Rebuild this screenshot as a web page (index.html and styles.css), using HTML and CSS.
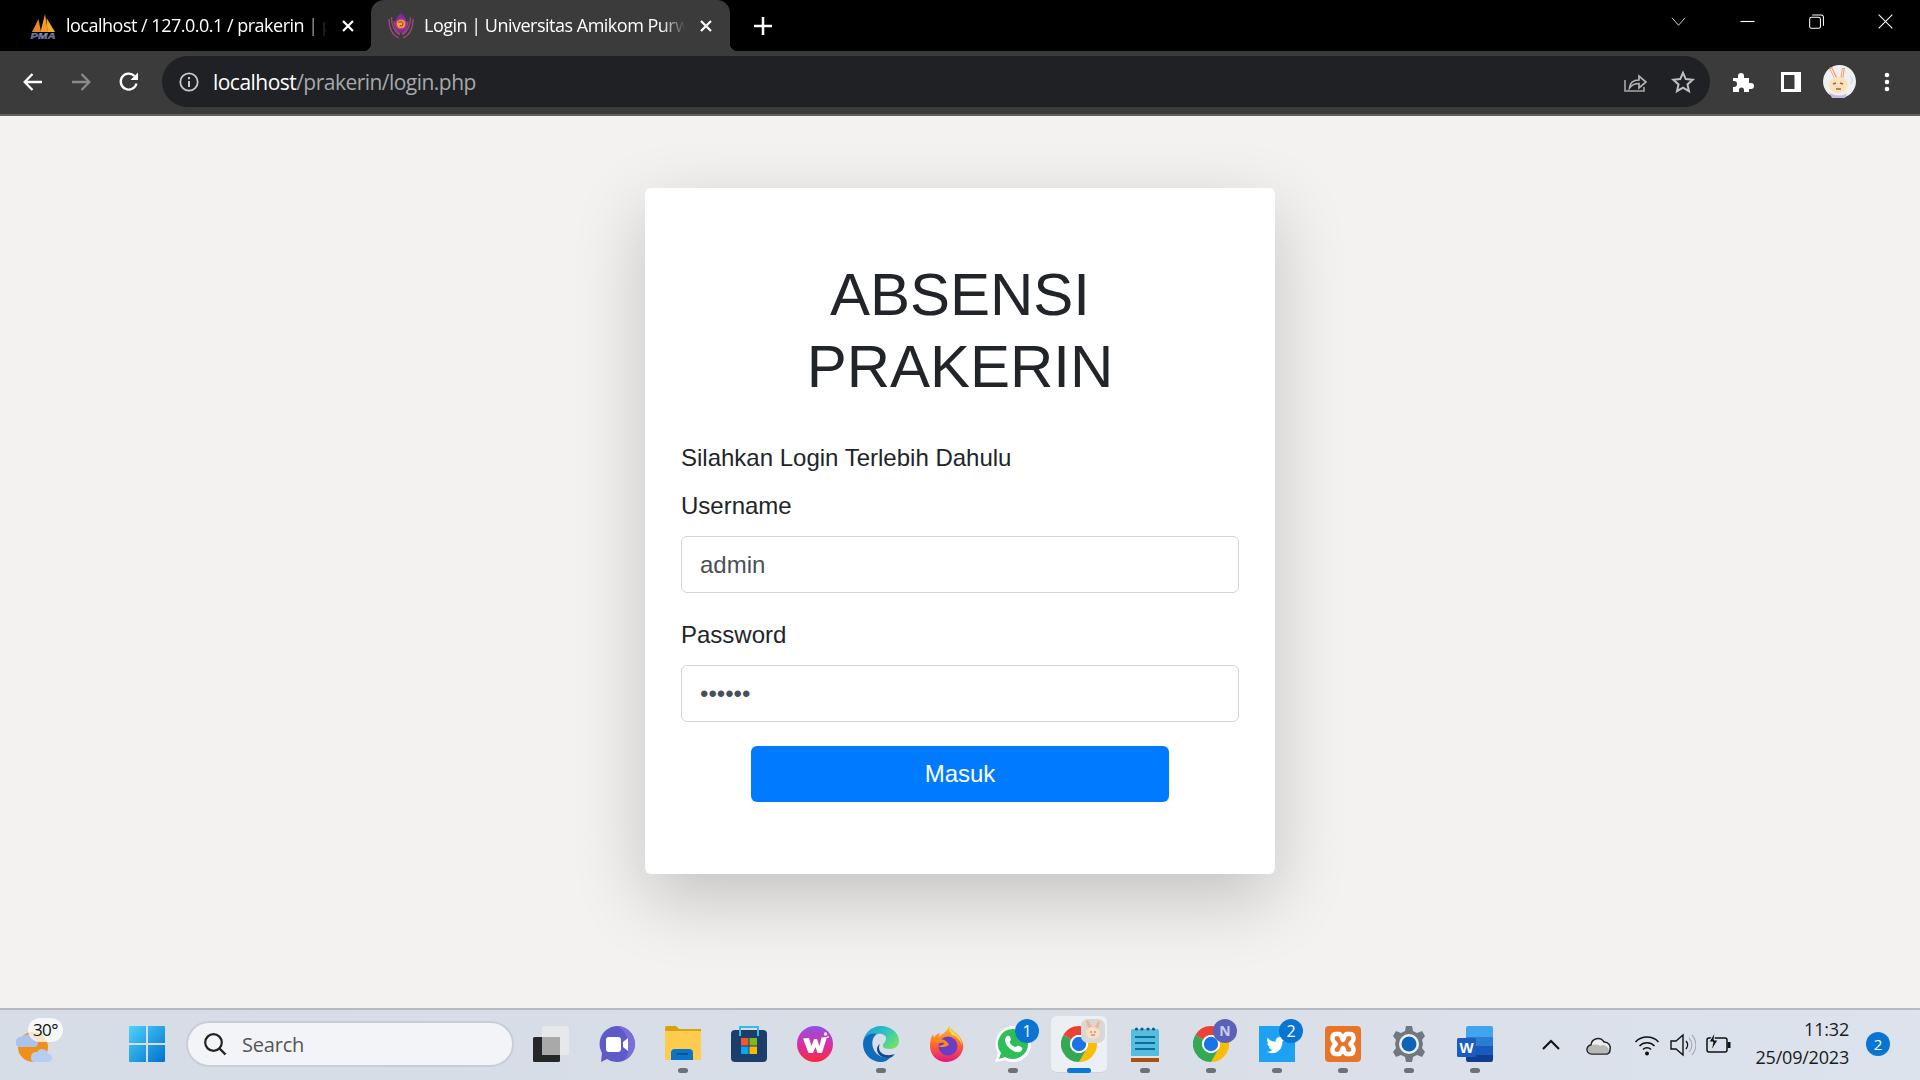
FILE: index.html
```html
<!DOCTYPE html>
<html lang="id">
<head>
<meta charset="utf-8">
<title>Login | Universitas Amikom Purwokerto</title>
<link rel="stylesheet" href="styles.css">
</head>
<body>
<header class="chrome">
  <div class="tabstrip">
    <div class="tab">
      <svg class="favicon" viewBox="0 0 26 26"><path d="M2 19 8.500 6 11 19z" fill="#e8862a"/><path d="M10.500 19 15 1l3 18z" fill="#f59a23"/><path d="M17.500 19 16.500 5 25 19z" fill="#f7ab2f"/><text x="13" y="25.500" class="pma" textLength="25" lengthAdjust="spacingAndGlyphs">PMA</text></svg>
      <span class="tab-title">localhost / 127.0.0.1 / prakerin | p</span>
      <svg class="tab-close" viewBox="0 0 14 14"><path d="M2 2l10 10M12 2 2 12" stroke="#fff" stroke-width="2.200"/></svg>
    </div>
    <div class="tab tab-active">
      <svg class="favicon" viewBox="0 0 26 26"><g fill="none" stroke="#9a4a7c" stroke-width="1.300"><path d="M1 6c0 9 3 16 10 19"/><path d="M25 6c0 9-3 16-10 19"/><path d="M3.500 4c0 8 2.500 14 8 18"/><path d="M22.500 4c0 8-2.500 14-8 18"/><path d="M6 8c.5 6 2 10 6 13"/><path d="M20 8c-.5 6-2 10-6 13"/></g><path d="M13 0c4 3 6 7 6 11 0 5-3 8-6 9-3-1-6-4-6-9 0-4 2-8 6-11z" fill="#7d2aa0"/><circle cx="13" cy="11" r="5.500" fill="#cf3d92"/><circle cx="13" cy="11" r="4" fill="#f5a818"/><path d="M10.500 9.500c3-2 5.500.5 4 3-1 1-2.500.5-2.500-.5" stroke="#6a1f88" fill="none"/></svg>
      <span class="tab-title">Login | Universitas Amikom Purw</span>
      <svg class="tab-close" viewBox="0 0 14 14"><path d="M2 2l10 10M12 2 2 12" stroke="#fff" stroke-width="2.200"/></svg>
    </div>
    <svg class="tab-new" viewBox="0 0 18 18"><path d="M9 0v18M0 9h18" stroke="#fff" stroke-width="2.500"/></svg>
    <div class="window-controls">
      <svg class="wc wc-down" viewBox="0 0 16 16"><path d="M1 4l7 8 7-8" fill="none" stroke="#ddd" stroke-width="1"/></svg>
      <svg class="wc wc-gap" viewBox="0 0 16 16"><path d="M.5 8h15" stroke="#fff" stroke-width="1.200"/></svg>
      <svg class="wc wc-gap" viewBox="0 0 16 16"><rect x=".7" y="3.500" width="11.500" height="11.800" rx="2" fill="none" stroke="#fff" stroke-width="1.100"/><path d="M3.500 1h9.500a2.400 2.400 0 0 1 2.400 2.400v9" fill="none" stroke="#fff" stroke-width="1.100"/></svg>
      <svg class="wc wc-gap" viewBox="0 0 16 16"><path d="M.7.700l14.600 14.600M15.300.7.700 15.300" stroke="#fff" stroke-width="1.100"/></svg>
    </div>
  </div>
  <div class="toolbar">
    <div class="tool"><svg viewBox="0 0 24 24"><path d="M21 12H4M11.500 4 3.700 12l7.800 8" fill="none" stroke="#fff" stroke-width="2.300"/></svg></div>
    <div class="tool"><svg viewBox="0 0 24 24"><path d="M3 12h17M12.500 4l7.800 8-7.800 8" fill="none" stroke="#8a8a8a" stroke-width="2.300"/></svg></div>
    <div class="tool"><svg viewBox="0 0 24 24"><path d="M19.500 13.500A8 8 0 1 1 17.500 6" fill="none" stroke="#fff" stroke-width="2.300"/><path d="M21 2.500V10h-7.500z" fill="#fff"/></svg></div>
    <div class="omnibox">
      <svg class="info" viewBox="0 0 20 20"><circle cx="10" cy="10" r="8.700" fill="none" stroke="#c8c8c8" stroke-width="1.800"/><path d="M10 9v6M10 5v2.200" stroke="#c8c8c8" stroke-width="2"/></svg>
      <span class="url"><span class="url-host">localhost</span>/prakerin/login.php</span>
      <div class="tool omni-first"><svg viewBox="0 0 24 24"><path d="M2 10v11h19v-4" fill="none" stroke="#a8a8a8" stroke-width="1.600"/><path d="M6.500 18c.5-5.500 4-8 9.500-8V6l7 6-7 6v-4.500c-4 0-7 1-9.500 4.500z" fill="none" stroke="#b4b4b4" stroke-width="1.700"/></svg></div>
      <div class="tool"><svg viewBox="0 0 24 24"><path d="M12 2.800l2.800 6.300 6.900.7-5.200 4.600 1.500 6.800-6-3.500-6 3.500 1.500-6.800-5.200-4.600 6.900-.7z" fill="none" stroke="#c0c0c0" stroke-width="2"/></svg></div>
    </div>
    <div class="tool tool-gap"><svg viewBox="0 0 24 24"><path d="M2 8h5V6a3 3 0 0 1 6 0v2h5v5h2a3 3 0 0 1 0 6h-2v3h-5v-2a2.500 2.500 0 0 0-5 0v2H2v-5h1a3 3 0 0 0 0-6H2z" fill="#fff"/></svg></div>
    <div class="tool"><svg viewBox="0 0 24 24"><path d="M2 2h20v20H2z" fill="#fff"/><path d="M5 5h10.500v14H5z" fill="#3b3b3b"/></svg></div>
    <div class="tool"><svg class="avatar" viewBox="0 0 33 33"><circle cx="16.500" cy="16.500" r="16.500" fill="#eef0f2"/><path d="M6 3l3-1 6 12-3 1z" fill="#f0a070"/><path d="M19 3l3 0-2 12h-3z" fill="#f0a070"/><path d="M7.500 4l1-.5 4.500 10-1 .5zM19.800 4h.8l-1.500 10h-.8z" fill="#fff3e6"/><ellipse cx="15.500" cy="20" rx="9.500" ry="8" fill="#f9e3bb"/><path d="M10 19l3-1M17 18l3 1M13 24h5" stroke="#c0553a" stroke-width="1.500"/><path d="M6 27c4 4 13 5 18 1l-2 5H9z" fill="#c9b8dc"/><path d="M27 11c3 2 3 6 0 8" fill="none" stroke="#b9d3e8"/></svg></div>
    <div class="tool"><svg viewBox="0 0 24 24"><circle cx="12" cy="5" r="2.300" fill="#fff"/><circle cx="12" cy="12" r="2.300" fill="#fff"/><circle cx="12" cy="19" r="2.300" fill="#fff"/></svg></div>
  </div>
</header>

<main class="page">
  <section class="card">
    <h1 class="title">ABSENSI PRAKERIN</h1>
    <p class="hint">Silahkan Login Terlebih Dahulu</p>
    <form class="form">
      <label class="label" for="user">Username</label>
      <input class="input" id="user" type="text" value="admin">
      <label class="label" for="pass">Password</label>
      <input class="input" id="pass" type="password" value="123456">
      <button class="submit" type="button">Masuk</button>
    </form>
  </section>
</main>

<footer class="taskbar">
  <div class="weather">
    <svg class="weather-icon" viewBox="0 0 46 40"><circle cx="19" cy="22" r="15" fill="#f08f1c"/><path d="M2 18a5 5 0 0 1 6-6 7 7 0 0 1 12 2 4 4 0 0 1 0 8H5a4 4 0 0 1-3-4z" fill="#a9c4ea"/><path d="M17 32a5 5 0 0 1 6-5 6 6 0 0 1 11 2 4 4 0 0 1 0 8H20a4 4 0 0 1-3-5z" fill="#b5cdf0"/></svg>
    <span class="temp">30°</span>
  </div>
  <div class="tb-cell tb-start">
    <svg class="tb-icon" viewBox="0 0 36 36"><defs><linearGradient id="win" x1="0" y1="0" x2="1" y2="1"><stop offset="0" stop-color="#4fd2fb"/><stop offset="1" stop-color="#0071ce"/></linearGradient></defs><path d="M0 1a1 1 0 0 1 1-1h16v17H0zM19 0h16a1 1 0 0 1 1 1v16H19zM0 19h17v17H1a1 1 0 0 1-1-1zM19 19h17v16a1 1 0 0 1-1 1H19z" fill="url(#win)"/></svg>
  </div>
  <div class="search">
    <svg class="search-icon" viewBox="0 0 24 24"><circle cx="10.500" cy="10.500" r="8.300" fill="none" stroke="#222" stroke-width="2.200"/><path d="M16.500 16.500l6 6" stroke="#222" stroke-width="2.400"/></svg>
    <span class="search-text">Search</span>
  </div>
  <div class="tb-apps">
    <div class="tb-cell"><svg class="tb-icon" viewBox="0 0 36 36"><rect y="11" width="27" height="25" rx="1.500" fill="#262626"/><rect x="9" width="27" height="29" rx="1.500" fill="#e8e9ea" fill-opacity=".9"/><rect x="9" y="11" width="18" height="18" fill="#a9a9a9"/></svg></div>
    <div class="tb-cell"><svg class="tb-icon" viewBox="0 0 36 36"><path d="M18 0a18 18 0 1 1-10 33l-6 3 1-9A18 18 0 0 1 18 0z" fill="#5e5ac9"/><path d="M18 0a18 18 0 0 1 18 18 18 18 0 0 1-11 16 14 14 0 0 0 3-16A17 17 0 0 0 18 0z" fill="#7a6fd6"/><rect x="7" y="11" width="15" height="15" rx="3" fill="#fff"/><path d="M24 16l5-4v13l-5-4z" fill="#fff"/></svg></div>
    <div class="tb-cell tb-run"><svg class="tb-icon" viewBox="0 0 36 36"><path d="M0 2a2 2 0 0 1 2-2h9l3 3h22v4H0z" fill="#d9a00f"/><path d="M0 5h35a1 1 0 0 1 1 1v28H0z" fill="#fdcb4d"/><path d="M6 34v-7a4 4 0 0 1 4-4h14a4 4 0 0 1 4 4v7z" fill="#0a74c7"/><path d="M12 28h11" stroke="#05518e" stroke-width="1.800"/></svg></div>
    <div class="tb-cell"><svg class="tb-icon" viewBox="0 0 36 36"><rect y="4" width="36" height="32" rx="4" fill="#1d3d6b"/><path d="M9 10V1h18v9" fill="none" stroke="#38b8ec" stroke-width="2"/><rect x="10" y="12" width="7.500" height="7.500" fill="#f05a28"/><rect x="18.500" y="12" width="7.500" height="7.500" fill="#81b81d"/><rect x="10" y="20.500" width="7.500" height="7.500" fill="#05a5f0"/><rect x="18.500" y="20.500" width="7.500" height="7.500" fill="#fdb900"/></svg></div>
    <div class="tb-cell"><svg class="tb-icon" viewBox="0 0 36 36"><defs><linearGradient id="wps" x1="0" y1="0" x2="0" y2="1"><stop offset="0" stop-color="#8f52e8"/><stop offset=".55" stop-color="#dc2ca0"/><stop offset="1" stop-color="#fa2a3c"/></linearGradient></defs><circle cx="18" cy="18" r="18" fill="url(#wps)"/><path d="M6 12.500 12 12l2.500 8 2.500-7h3l2.500 7 2-8.500 5.500-.5L25 27h-4.500L18.500 21 16 27h-4.500z" fill="#fff"/><circle cx="28.500" cy="8" r="1.700" fill="#fff"/><circle cx="31" cy="11" r=".9" fill="#fff"/></svg></div>
    <div class="tb-cell tb-run"><svg class="tb-icon" viewBox="0 0 36 36"><defs><linearGradient id="edge1" x1="0" y1="0" x2="1" y2=".6"><stop offset="0" stop-color="#1b9bd8"/><stop offset=".6" stop-color="#2fc5c0"/><stop offset="1" stop-color="#6be06a"/></linearGradient></defs><path d="M0 18C0 8 8 0 18 0c10 0 18 7 18 15 0 5-4 8-9 8-4 0-7-1-7-3 0-4 3-3 3-8 0-3-5-5-8-4C7 9 0 12 0 18z" fill="url(#edge1)"/><path d="M0 18c0-8 8-12 14-10-5 3-6 10-3 16 3 6 10 9 17 7-3 3-6 5-10 5C8 36 0 28 0 18z" fill="#0f6cbd"/><path d="M14 23c0 7 8 11 15 8l3-3c-3 1-8 2-12 0-4-2-5-7-3-10-2 1-3 3-3 5z" fill="#114a8b"/></svg></div>
    <div class="tb-cell"><svg class="tb-icon" viewBox="0 0 36 36"><defs><linearGradient id="ff" x1="0" y1="0" x2="0" y2="1"><stop offset="0" stop-color="#ffbd2f"/><stop offset=".5" stop-color="#ff6a2a"/><stop offset="1" stop-color="#e31587"/></linearGradient></defs><path d="M20 0c1 3 5 5 8 8 5 5 7 10 6 15-2 8-9 13-17 13C8 36 1 29 1 20c0-5 1-9 3-12l1 4c1-3 3-4 6-5-1 2-1 3-1 4 3-3 8-5 10-11z" fill="url(#ff)"/><path d="M20 1c1 3 5 5 8 8 3 3 5 6 5 10-2-5-5-9-10-10-2-2-3-5-3-8z" fill="#ffe14d"/><circle cx="19" cy="20" r="9.500" fill="#6a3dc4"/><path d="M5 15c3 3 7 1 11 2-2 2-4 3-7 3 3 2 8 1 11-1-1-3-5-6-9-6-2 0-5 0-6 2z" fill="#ff8a1f"/></svg></div>
    <div class="tb-cell tb-run"><svg class="tb-icon" viewBox="0 0 36 36"><path d="M18 0a18 18 0 0 1 0 36c-3 0-6-1-8-2l-10 2 3-9A18 18 0 0 1 18 0z" fill="#fff"/><path d="M18 3a15 15 0 0 1 0 30c-3 0-6-1-8-2l-6 2 2-6A15 15 0 0 1 18 3z" fill="#2dbf57"/><path d="M12 10c2-1 3 0 4 3 0 2-2 2-1 4 1 2 3 3 5 4 2 0 2-2 4-1 3 1 4 2 3 4-2 3-6 3-10 0-4-2-7-7-7-10 0-2 1-3 2-4z" fill="#fff"/></svg><span class="badge">1</span></div>
    <div class="tb-cell tb-active"><svg class="tb-icon" viewBox="0 0 36 36"><use href="#chrome-logo"/></svg><svg class="tb-corner" viewBox="0 0 24 24"><rect width="24" height="24" rx="7" fill="#d9d7d5"/><path d="M7 9 5 2l2-1 4 7zM14 8l3-6 2 1-2 7z" fill="#f2b594"/><ellipse cx="12" cy="14" rx="7" ry="6" fill="#f7e0c4"/><path d="M9 13h2M13 13h2M10 16h4" stroke="#bd6a55" stroke-width="1"/></svg></div>
    <div class="tb-cell tb-run"><svg class="tb-icon" viewBox="0 0 36 36"><rect x="4" y="3" width="28" height="28" rx="2" fill="#54bde0"/><circle cx="9.500" cy="3" r="1.600" fill="#0c5f85"/><circle cx="15" cy="3" r="1.600" fill="#0c5f85"/><circle cx="21" cy="3" r="1.600" fill="#0c5f85"/><circle cx="26.500" cy="3" r="1.600" fill="#0c5f85"/><path d="M8 11h20M8 17h20M8 23h20" stroke="#0c6d96" stroke-width="2"/><rect x="4" y="31" width="28" height="5" fill="#a65212"/><rect x="4" y="30" width="28" height="2" fill="#e8e2d8"/></svg></div>
    <div class="tb-cell tb-run"><svg class="tb-icon" viewBox="0 0 36 36"><use href="#chrome-logo"/></svg><span class="tb-corner tb-letter">N</span></div>
    <div class="tb-cell tb-run"><svg class="tb-icon" viewBox="0 0 36 36"><rect width="36" height="36" fill="#1da1f2"/><path transform="translate(3.500 4) scale(.8)" d="M29 11c-1 .5-2 1-3 1 1-.6 2-1.700 2-3-1 .6-2 1-3 1.200a5 5 0 0 0-8.500 4.500c-4 0-8-2-10-5-1.500 2.500-.7 5.500 1.500 7-.8 0-1.500-.2-2-.5 0 2.500 1.700 4.500 4 5-.7.200-1.500.2-2.200.1.700 2 2.500 3.400 4.700 3.400-2.500 2-5 2.500-7.500 2.300 8 5 20 1 20-12.500 1-.7 1.800-1.600 2.500-2.500z" fill="#fff"/></svg><span class="badge">2</span></div>
    <div class="tb-cell tb-run"><svg class="tb-icon" viewBox="0 0 36 36"><rect width="36" height="36" rx="4" fill="#e8742a"/><path d="M11 8h3c3 0 3 6 4 6s1-6 4-6h3c4 0 5 6 1 9-1 1-1 1 0 2 4 3 3 9-1 9h-3c-3 0-3-6-4-6s-1 6-4 6h-3c-4 0-5-6-1-9 1-1 1-1 0-2-4-3-3-9 1-9z" fill="none" stroke="#fff" stroke-width="4.500"/></svg></div>
    <div class="tb-cell tb-run"><svg class="tb-icon" viewBox="0 0 36 36"><path d="M15 0h6l1 5 4 2 5-2 3 5-3 4 1 4-1 4 3 4-3 5-5-2-4 2-1 5h-6l-1-5-4-2-5 2-3-5 3-4-1-4 1-4-3-4 3-5 5 2 4-2z" fill="#70787f"/><circle cx="18" cy="18" r="10" fill="#eef1f5"/><circle cx="18" cy="18" r="7.500" fill="#0b64b8"/></svg></div>
    <div class="tb-cell tb-run"><svg class="tb-icon" viewBox="0 0 36 36"><path d="M9 2a2 2 0 0 1 2-2h23a2 2 0 0 1 2 2v9H9z" fill="#41a5ee"/><rect x="9" y="11" width="27" height="9" fill="#2b7cd3"/><rect x="9" y="20" width="27" height="9" fill="#185abd"/><path d="M9 29h27v5a2 2 0 0 1-2 2H11a2 2 0 0 1-2-2z" fill="#103f91"/><rect y="12" width="19" height="19" rx="1.500" fill="#1a5dc0"/><text x="9.500" y="27" class="word-w">W</text></svg></div>
  </div>
  <div class="tray">
    <svg class="tray-icon tray-chevron" viewBox="0 0 20 20"><path d="M2 14l8-8 8 8" fill="none" stroke="#111" stroke-width="2"/></svg>
    <svg class="tray-icon tray-cloud" viewBox="0 0 26 22"><path d="M6 20a4.500 4.500 0 0 1-1-9 7 7 0 0 1 13-3 6 6 0 0 1 6 8 4 4 0 0 1-3 4z" fill="#ececec" stroke="#222" stroke-width="1.500"/><path d="M3 13c3-3 8-3 11-1 3-2 7-1 9 4 0 2-1 4-3 4H6a4 4 0 0 1-3-7z" fill="#8e8e8e" fill-opacity=".55"/></svg>
    <svg class="tray-icon tray-wifi" viewBox="0 0 26 22"><path d="M1.500 8a16 16 0 0 1 23 0M5.500 12a10.500 10.500 0 0 1 15 0M9 15.500a5.500 5.500 0 0 1 8 0" fill="none" stroke="#111" stroke-width="1.500"/><circle cx="13" cy="19.500" r="2" fill="#111"/></svg>
    <svg class="tray-icon tray-vol" viewBox="0 0 26 24"><path d="M1 8h5l7-6v20l-7-6H1z" fill="none" stroke="#111" stroke-width="1.400"/><path d="M16 8a6 6 0 0 1 0 8" fill="none" stroke="#111" stroke-width="1.400"/><path d="M19 5a10 10 0 0 1 0 14M22 2a15 15 0 0 1 0 20" fill="none" stroke="#aab" stroke-width="1.200"/></svg>
    <svg class="tray-icon tray-bat" viewBox="0 0 26 24"><rect x="2" y="7" width="20" height="14" rx="2" fill="none" stroke="#111" stroke-width="1.500"/><rect x="22.500" y="11" width="3" height="6" fill="#111"/><path d="M10 1 4 11h4l-2 9 7-11H9z" fill="#111" stroke="#dde3ec"/></svg>
    <div class="clock"><span>11:32</span><span>25/09/2023</span></div>
    <span class="notify">2</span>
  </div>
</footer>

<svg class="defs" width="0" height="0"><defs><g id="chrome-logo"><path d="M18 0A18 18 0 0 1 33.600 9H18a9 9 0 0 0-7.800 4.500L2.400 9A18 18 0 0 1 18 0z" fill="#ea4335"/><path d="M33.600 9A18 18 0 0 1 18 36l7.800-13.500A9 9 0 0 0 18 9z" fill="#fbbc04"/><path d="M2.400 9A18 18 0 0 0 18 36l7.800-13.500a9 9 0 0 1-15.600-9z" fill="#34a853"/><circle cx="18" cy="18" r="9" fill="#fff"/><circle cx="18" cy="18" r="7.200" fill="#1a73e8"/></g></defs></svg>
</body>
</html>
```

FILE: styles.css
```css
* { box-sizing: border-box; }

html, body { height: 100%; }

body {
  margin: 0;
  display: flex;
  flex-direction: column;
  height: 1080px;
  overflow: hidden;
  background: #f3f2f1;
  font-family: "Liberation Sans", Arial, sans-serif;
  color: #212529;
}

/* browser chrome */
.chrome { flex: none; font-family: "Open Sans", "Noto Sans", sans-serif; }

.tabstrip {
  display: flex;
  align-items: center;
  height: 51px;
  background: #000;
  color: #fff;
}

.tab {
  position: relative;
  display: flex;
  align-items: center;
  width: 371px;
  height: 51px;
  padding: 0 16px 0 30px;
}

.tab-active {
  width: 359px;
  padding-left: 17px;
  padding-right: 17px;
  background: #3b3b3b;
  border-radius: 13px 13px 0 0;
}

.tab-active::before,
.tab-active::after {
  content: "";
  position: absolute;
  bottom: 0;
  width: 8px;
  height: 8px;
}

.tab-active::before { left: -8px; background: radial-gradient(circle at 0 0, #000 8px, #3b3b3b 8.5px); }
.tab-active::after { right: -8px; background: radial-gradient(circle at 100% 0, #000 8px, #3b3b3b 8.5px); }

.favicon { flex: none; width: 26px; height: 26px; margin-right: 10px; }

.pma { font: italic 700 9px "Liberation Sans", sans-serif; fill: #4d5c9c; text-anchor: middle; stroke: #c7cde0; stroke-width: .25px; }

.tab-title {
  flex: 1;
  min-width: 0;
  margin-top: -2px;
  white-space: nowrap;
  font-size: 18px;
  letter-spacing: -.5px;
  -webkit-mask-image: linear-gradient(to right, #000 90%, transparent 99%);
  mask-image: linear-gradient(to right, #000 90%, transparent 99%);
}

.tab-close { flex: none; width: 14px; height: 14px; margin-left: 11px; }

.tab-new { flex: none; width: 18px; height: 18px; margin-left: 24px; }

.window-controls {
  display: flex;
  align-items: center;
  margin-left: auto;
  padding-right: 27px;
  align-self: flex-start;
  padding-top: 14px;
}

.wc { width: 15px; height: 15px; display: block; }
.wc-gap { margin-left: 54px; }

.toolbar {
  display: flex;
  align-items: center;
  height: 65px;
  padding: 0 9px 2px;
  background: #3b3b3b;
  border-bottom: 2px solid #5f5f5f;
}

.tool {
  flex: none;
  display: flex;
  align-items: center;
  justify-content: center;
  width: 48px;
  height: 48px;
}

.tool svg { width: 24px; height: 24px; }
.tool .avatar { width: 33px; height: 33px; }
.tool-gap { margin-left: 9px; }

.omnibox {
  flex: 1;
  display: flex;
  align-items: center;
  height: 51px;
  margin-left: 9px;
  padding: 0 3px 0 17px;
  background: #202124;
  border-radius: 26px;
}

.info { flex: none; width: 20px; height: 20px; margin-right: 14px; }

.url { font-size: 21px; letter-spacing: -.53px; color: #a6a8ab; white-space: nowrap; }
.url-host { color: #fff; }
.omni-first { margin-left: auto; }

/* page */
.page {
  flex: 1;
  display: flex;
  justify-content: center;
  align-items: flex-start;
  padding-top: 72px;
  min-height: 0;
}

.card {
  width: 630px;
  height: 686px;
  padding: 71px 36px 36px;
  background: #fff;
  border-radius: 6px;
  box-shadow: 0 24px 72px rgba(0, 0, 0, .2);
}

.title {
  margin: 0 0 37px;
  padding: 0 60px;
  font-size: 60px;
  font-weight: 400;
  line-height: 72px;
  text-align: center;
}

.hint { margin: 0 0 12px; font-size: 24px; line-height: 36px; }

.form { display: block; }

.label { display: block; margin-bottom: 12px; font-size: 24px; line-height: 36px; }

.input {
  display: block;
  width: 100%;
  height: 57px;
  margin-bottom: 24px;
  padding: 9px 18px;
  border: 1.5px solid #ced4da;
  border-radius: 6px;
  background: #fff;
  color: #495057;
  font: 24px/36px "Liberation Sans", Arial, sans-serif;
}

.submit {
  display: block;
  width: 418px;
  height: 56px;
  margin: 0 auto;
  border: 0;
  border-radius: 6px;
  background: #007bff;
  color: #fff;
  font: 24px/36px "Liberation Sans", Arial, sans-serif;
}

/* taskbar */
.taskbar {
  flex: none;
  display: flex;
  align-items: center;
  height: 72px;
  padding-bottom: 2px;
  border-top: 2px solid #b6babf;
  background: linear-gradient(to right, #d6dde6, #d9dee7 60%, #dde3ed);
  font-family: "Open Sans", "Noto Sans", sans-serif;
  color: #111;
}

.weather { position: relative; flex: none; width: 114px; height: 70px; }

.weather-icon { position: absolute; left: 14px; top: 16px; width: 46px; height: 40px; }

.temp {
  position: absolute;
  left: 28px;
  top: 9px;
  width: 35px;
  height: 24px;
  border-radius: 12px;
  background: rgba(255, 255, 255, .75);
  font-size: 17px;
  line-height: 24px;
  text-align: center;
  letter-spacing: -.5px;
}

.tb-cell {
  position: relative;
  flex: none;
  display: flex;
  align-items: center;
  justify-content: center;
  width: 66px;
  height: 70px;
}

.tb-start { margin-right: 6px; }

.tb-icon { display: block; width: 36px; height: 36px; }

.tb-run::after,
.tb-active::after {
  content: "";
  position: absolute;
  left: 50%;
  bottom: 6px;
  width: 10px;
  height: 5px;
  margin-left: -5px;
  border-radius: 3px;
  background: #6e7175;
}

.tb-active::before {
  content: "";
  position: absolute;
  left: 5px;
  right: 5px;
  top: 7px;
  bottom: 6px;
  border-radius: 6px;
  background: #eceff4;
  border-bottom: 1px solid #cfd4da;
}

.tb-active .tb-icon { position: relative; }

.tb-active::after {
  width: 24px;
  margin-left: -12px;
  background: #0a78d4;
}

.tb-corner {
  position: absolute;
  right: 7px;
  top: 10px;
  width: 24px;
  height: 24px;
}

.tb-letter {
  border-radius: 50%;
  background: #5a62b8;
  color: #c8cdf0;
  font-size: 14px;
  font-weight: 700;
  line-height: 24px;
  text-align: center;
}

.badge {
  position: absolute;
  right: 7px;
  top: 10px;
  width: 24px;
  height: 24px;
  border-radius: 50%;
  background: #0a74d2;
  color: #fff;
  font-size: 16px;
  line-height: 24px;
  text-align: center;
}

.search {
  flex: none;
  display: flex;
  align-items: center;
  width: 328px;
  height: 46px;
  padding-left: 15px;
  border: 2px solid #c8ced6;
  border-radius: 23px;
  background: #f2f4f7;
}

.search-icon { flex: none; width: 24px; height: 24px; }

.search-text { margin-left: 15px; font-size: 20px; letter-spacing: -.2px; color: #555; }

.tb-apps { flex: none; display: flex; margin-left: 4px; }

.tray { flex: 1; position: relative; height: 70px; display: flex; align-items: center; }

.tray-icon { position: absolute; display: block; }
.tray-chevron { left: 33px; top: 26px; width: 20px; height: 20px; }
.tray-cloud { left: 78px; top: 25px; width: 26px; height: 22px; }
.tray-wifi { left: 126px; top: 25px; width: 26px; height: 22px; }
.tray-vol { left: 162px; top: 24px; width: 26px; height: 24px; }
.tray-bat { left: 197px; top: 22px; width: 26px; height: 24px; }

.clock {
  position: absolute;
  right: 71px;
  top: 8px;
  display: flex;
  flex-direction: column;
  align-items: flex-end;
  gap: 3px;
  font-size: 18px;
  line-height: 25px;
  letter-spacing: -.2px;
  color: #1a1a1a;
}

.notify {
  position: absolute;
  right: 30px;
  top: 23px;
  width: 24px;
  height: 24px;
  border-radius: 50%;
  background: #0a74d2;
  color: #fff;
  font-size: 15px;
  line-height: 24px;
  text-align: center;
}

.word-w { font: 700 15px "Liberation Sans", sans-serif; fill: #fff; text-anchor: middle; }

.defs { position: absolute; }
```
